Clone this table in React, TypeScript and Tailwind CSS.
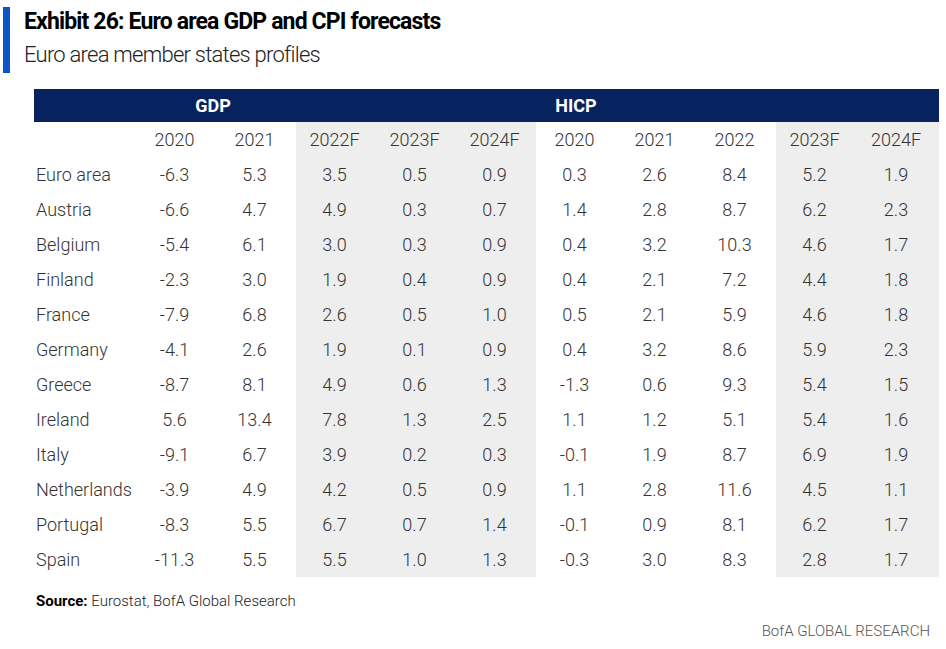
const rows: [string, string[]][] = [
  ['Euro area', ['-6.3', '5.3', '3.5', '0.5', '0.9', '0.3', '2.6', '8.4', '5.2', '1.9']],
  ['Austria', ['-6.6', '4.7', '4.9', '0.3', '0.7', '1.4', '2.8', '8.7', '6.2', '2.3']],
  ['Belgium', ['-5.4', '6.1', '3.0', '0.3', '0.9', '0.4', '3.2', '10.3', '4.6', '1.7']],
  ['Finland', ['-2.3', '3.0', '1.9', '0.4', '0.9', '0.4', '2.1', '7.2', '4.4', '1.8']],
  ['France', ['-7.9', '6.8', '2.6', '0.5', '1.0', '0.5', '2.1', '5.9', '4.6', '1.8']],
  ['Germany', ['-4.1', '2.6', '1.9', '0.1', '0.9', '0.4', '3.2', '8.6', '5.9', '2.3']],
  ['Greece', ['-8.7', '8.1', '4.9', '0.6', '1.3', '-1.3', '0.6', '9.3', '5.4', '1.5']],
  ['Ireland', ['5.6', '13.4', '7.8', '1.3', '2.5', '1.1', '1.2', '5.1', '5.4', '1.6']],
  ['Italy', ['-9.1', '6.7', '3.9', '0.2', '0.3', '-0.1', '1.9', '8.7', '6.9', '1.9']],
  ['Netherlands', ['-3.9', '4.9', '4.2', '0.5', '0.9', '1.1', '2.8', '11.6', '4.5', '1.1']],
  ['Portugal', ['-8.3', '5.5', '6.7', '0.7', '1.4', '-0.1', '0.9', '8.1', '6.2', '1.7']],
  ['Spain', ['-11.3', '5.5', '5.5', '1.0', '1.3', '-0.3', '3.0', '8.3', '2.8', '1.7']],
]

const years = ['2020', '2021', '2022F', '2023F', '2024F', '2020', '2021', '2022', '2023F', '2024F']

// forecast columns get the grey band
const shaded = [false, false, true, true, true, false, false, false, true, true]

function Cell({ value, i }: { value: string; i: number }) {
  return (
    <div className={`h-[35px] flex items-center justify-center pr-[3px] ${shaded[i] ? 'bg-[#eeeeee]' : ''}`}>
      {value}
    </div>
  )
}

export default function App() {
  return (
    <div
      className="w-[946px] h-[649px] bg-white text-[#333333] overflow-hidden"
      style={{ fontFamily: 'Roboto, "Liberation Sans", sans-serif' }}
    >
      {/* Title */}
      <div className="flex pl-[3px] pt-[7px]">
        <div className="w-[7px] h-[66px] bg-[#0b55c9]" />
        <div className="ml-[14px]">
          <h1 className="text-[23px] leading-[30px] font-bold tracking-[-0.85px] text-black">
            Exhibit 26: Euro area GDP and CPI forecasts
          </h1>
          <p className="mt-[3px] text-[22px] leading-[30px] font-light tracking-[-0.75px] text-[#222222]">
            Euro area member states profiles
          </p>
        </div>
      </div>

      {/* Table */}
      <div className="ml-[34px] mt-[16px] w-[905px] text-[18px] font-light">
        <div className="grid grid-cols-[102px_repeat(9,80px)_83px] h-[33px] bg-[#07235f] text-white font-bold">
          <div />
          <div className="col-span-2 flex items-center justify-center pr-[6px]">GDP</div>
          <div className="col-span-3" />
          <div className="flex items-center justify-center">HICP</div>
          <div className="col-span-4" />
        </div>
        <div className="grid grid-cols-[102px_repeat(9,80px)_83px]">
          <div className="h-[35px]" />
          {years.map((y, i) => (
            <Cell key={i} value={y} i={i} />
          ))}
          {rows.map(([name, vals]) => (
            <div key={name} className="contents">
              <div className="h-[35px] flex items-center pl-[2px]">{name}</div>
              {vals.map((v, i) => (
                <Cell key={i} value={v} i={i} />
              ))}
            </div>
          ))}
        </div>
      </div>

      {/* Footer */}
      <div className="ml-[36px] mt-[14px] text-[15px] leading-[20px] font-light text-[#222222]">
        <span className="font-bold text-black">Source:</span> Eurostat, BofA Global Research
      </div>
      <div className="mt-[10px] pr-[16px] text-right text-[15px] leading-[20px] font-light text-[#555555]">
        BofA GLOBAL RESEARCH
      </div>
    </div>
  )
}
